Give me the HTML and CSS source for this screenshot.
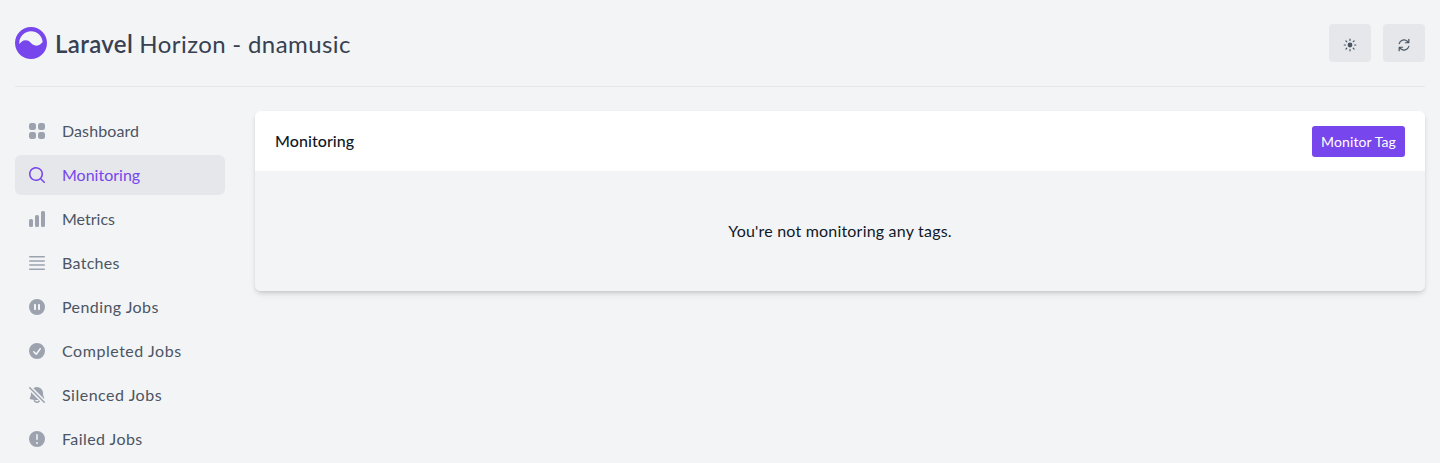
FILE: index.html
```html
<!DOCTYPE html>
<html lang="en">
<head>
<meta charset="utf-8">
<title>Horizon - Monitoring</title>
<link rel="stylesheet" href="styles.css">
</head>
<body>
<div class="container">
  <header class="header">
    <svg class="logo" viewBox="0 0 30 30"><path d="M5.26176342 26.4094389C2.04147988 23.6582233 0 19.5675182 0 15c0-4.1421356 1.67893219-7.89213562 4.39339828-10.60660172C7.10786438 1.67893219 10.8578644 0 15 0c8.2842712 0 15 6.71572875 15 15 0 8.2842712-6.7157288 15-15 15-3.716753 0-7.11777662-1.3517984-9.73823658-3.5905611zM4.03811305 15.9222506C5.70084247 14.4569342 6.87195416 12.5 10 12.5c5 0 5 5 10 5 3.1280454 0 4.2991572-1.9569336 5.961887-3.4222502C25.4934253 8.43417206 20.7645408 4 15 4 8.92486775 4 4 8.92486775 4 15c0 .3105915.01287248.6181765.03811305.9222506z"/></svg>
    <h1 class="brand"><strong>Laravel</strong> Horizon - dnamusic</h1>
    <button class="tool" aria-label="Theme"><svg viewBox="0 0 20 20"><path d="M10 2a.75.75 0 01.75.75v1.5a.75.75 0 01-1.5 0v-1.5A.75.75 0 0110 2zM10 15a.75.75 0 01.75.75v1.5a.75.75 0 01-1.5 0v-1.5A.75.75 0 0110 15zM10 7a3 3 0 100 6 3 3 0 000-6zM15.657 5.404a.75.75 0 10-1.06-1.06l-1.061 1.06a.75.75 0 001.06 1.06l1.06-1.06zM6.464 14.596a.75.75 0 10-1.06-1.06l-1.06 1.06a.75.75 0 001.06 1.06l1.06-1.06zM18 10a.75.75 0 01-.75.75h-1.5a.75.75 0 010-1.5h1.5A.75.75 0 0118 10zM5 10a.75.75 0 01-.75.75h-1.5a.75.75 0 010-1.5h1.5A.75.75 0 015 10zM14.596 15.657a.75.75 0 001.06-1.06l-1.06-1.061a.75.75 0 10-1.06 1.06l1.06 1.06zM5.404 6.464a.75.75 0 001.06-1.06l-1.06-1.06a.75.75 0 10-1.061 1.06l1.06 1.06z"/></svg></button>
    <button class="tool" aria-label="Auto refresh"><svg viewBox="0 0 20 20"><path fill-rule="evenodd" d="M15.312 11.424a5.5 5.5 0 01-9.201 2.466l-.312-.311h2.433a.75.75 0 000-1.5H3.989a.75.75 0 00-.75.75v4.242a.75.75 0 001.5 0v-2.43l.31.31a7 7 0 0011.712-3.138.75.75 0 00-1.449-.39zm1.23-3.723a.75.75 0 00.219-.53V2.929a.75.75 0 00-1.5 0V5.36l-.31-.31A7 7 0 003.239 8.188a.75.75 0 101.448.389A5.5 5.5 0 0113.89 6.11l.311.31h-2.432a.75.75 0 000 1.5h4.243a.75.75 0 00.53-.219z"/></svg></button>
  </header>
  <div class="layout">
    <nav class="sidebar">
      <a class="item dashboard"><svg viewBox="0 0 20 20"><path d="M4.25 2A2.25 2.25 0 002 4.25v2.5A2.25 2.25 0 004.25 9h2.5A2.25 2.25 0 009 6.75v-2.5A2.25 2.25 0 006.75 2h-2.5zm0 9A2.25 2.25 0 002 13.25v2.5A2.25 2.25 0 004.25 18h2.5A2.25 2.25 0 009 15.75v-2.5A2.25 2.25 0 006.75 11h-2.5zm9-9A2.25 2.25 0 0011 4.25v2.5A2.25 2.25 0 0013.25 9h2.5A2.25 2.25 0 0018 6.75v-2.5A2.25 2.25 0 0015.75 2h-2.5zm0 9A2.25 2.25 0 0011 13.25v2.5A2.25 2.25 0 0013.25 18h2.5A2.25 2.25 0 0018 15.75v-2.5A2.25 2.25 0 0015.75 11h-2.5z"/></svg><span>Dashboard</span></a>
      <a class="item monitoring active"><svg viewBox="0 0 20 20"><path fill-rule="evenodd" d="M9 3.5a5.5 5.5 0 100 11 5.5 5.5 0 000-11zM2 9a7 7 0 1112.452 4.391l3.328 3.329a.75.75 0 11-1.06 1.06l-3.329-3.328A7 7 0 012 9z"/></svg><span>Monitoring</span></a>
      <a class="item metrics"><svg viewBox="0 0 20 20"><path d="M15.5 2A1.5 1.5 0 0014 3.5v13a1.5 1.5 0 001.5 1.5h1a1.5 1.5 0 001.5-1.5v-13A1.5 1.5 0 0016.5 2h-1zM9.5 6A1.5 1.5 0 008 7.5v9A1.5 1.5 0 009.5 18h1a1.5 1.5 0 001.5-1.5v-9A1.5 1.5 0 0010.5 6h-1zM3.5 10A1.5 1.5 0 002 11.5v5A1.5 1.5 0 003.5 18h1A1.5 1.5 0 006 16.5v-5A1.5 1.5 0 004.5 10h-1z"/></svg><span>Metrics</span></a>
      <a class="item"><svg viewBox="0 0 20 20"><path fill-rule="evenodd" d="M2 3.75A.75.75 0 012.75 3h14.5a.75.75 0 010 1.5H2.75A.75.75 0 012 3.75zm0 4.167a.75.75 0 01.75-.75h14.5a.75.75 0 010 1.5H2.75a.75.75 0 01-.75-.75zm0 4.166a.75.75 0 01.75-.75h14.5a.75.75 0 010 1.5H2.75a.75.75 0 01-.75-.75zm0 4.167a.75.75 0 01.75-.75h14.5a.75.75 0 010 1.5H2.75a.75.75 0 01-.75-.75z"/></svg><span>Batches</span></a>
      <a class="item pending"><svg viewBox="0 0 20 20"><path fill-rule="evenodd" d="M2 10a8 8 0 1116 0 8 8 0 01-16 0zm5-2.25A.75.75 0 017.75 7h.5a.75.75 0 01.75.75v4.5a.75.75 0 01-.75.75h-.5a.75.75 0 01-.75-.75v-4.5zm4 0a.75.75 0 01.75-.75h.5a.75.75 0 01.75.75v4.5a.75.75 0 01-.75.75h-.5a.75.75 0 01-.75-.75v-4.5z"/></svg><span>Pending Jobs</span></a>
      <a class="item completed"><svg viewBox="0 0 20 20"><path fill-rule="evenodd" d="M10 18a8 8 0 100-16 8 8 0 000 16zm3.857-9.809a.75.75 0 00-1.214-.882l-3.483 4.79-1.88-1.88a.75.75 0 10-1.06 1.061l2.5 2.5a.75.75 0 001.137-.089l4-5.5z"/></svg><span>Completed Jobs</span></a>
      <a class="item silenced"><svg viewBox="0 0 20 20"><path d="M4 8c0-.26.017-.517.049-.77l7.722 7.723a33.56 33.56 0 01-3.722-.01 2 2 0 003.862.15l1.134 1.134a3.5 3.5 0 01-6.53-1.409 32.91 32.91 0 01-3.257-.508.75.75 0 01-.515-1.076A11.448 11.448 0 004 8zM17.266 13.9a.756.756 0 01-.068.116L6.389 3.207A6 6 0 0116 8c.001 1.887.455 3.665 1.258 5.234a.75.75 0 01.01.666zM3.28 2.22a.75.75 0 00-1.06 1.06l14.5 14.5a.75.75 0 101.06-1.06L3.28 2.22z"/></svg><span>Silenced Jobs</span></a>
      <a class="item failed"><svg viewBox="0 0 20 20"><path fill-rule="evenodd" d="M18 10a8 8 0 11-16 0 8 8 0 0116 0zm-8-5a.75.75 0 01.75.75v4.5a.75.75 0 01-1.5 0v-4.5A.75.75 0 0110 5zm0 10a1 1 0 100-2 1 1 0 000 2z"/></svg><span>Failed Jobs</span></a>
    </nav>
    <main class="card">
      <div class="card-header">
        <h2 class="title">Monitoring</h2>
        <button class="primary">Monitor Tag</button>
      </div>
      <div class="empty"><span>You're not monitoring any tags.</span></div>
    </main>
  </div>
</div>
</body>
</html>
```
FILE: styles.css
```css
* { box-sizing: border-box; }
body {
  margin: 0;
  height: 463px;
  overflow: hidden;
  background: #f3f4f6;
  color: #111827;
  font: 16px/24px Lato, sans-serif;
}
.container { padding: 0 15px; }
.header {
  display: flex;
  align-items: center;
  height: 87px;
  border-bottom: 1px solid #e5e7eb;
}
.logo { width: 32px; height: 32px; fill: #7746ec; }
.brand {
  flex: 1;
  margin: 1px 0 0 8px;
  color: #374151;
  font-size: 24px;
  font-weight: 400;
  line-height: 36px;
  letter-spacing: 0.45px;
  word-spacing: -0.4px;
}
.brand strong { font-weight: 600; letter-spacing: 0.35px; }
.tool {
  display: flex;
  align-items: center;
  justify-content: center;
  width: 42px;
  height: 38px;
  margin-left: 12px;
  padding: 4px 0 0;
  border: 0;
  border-radius: 4px;
  background: #e5e7eb;
}
.tool svg { width: 16px; height: 16px; fill: #4b5563; }
.layout { display: flex; align-items: flex-start; gap: 30px; padding-top: 24px; }
.sidebar { display: flex; flex-direction: column; gap: 4px; width: 210px; }
.item {
  display: flex;
  align-items: center;
  gap: 15px;
  height: 40px;
  padding: 0 12px;
  border-radius: 6px;
  color: #4b5563;
  letter-spacing: 0.3px;
}
.item svg { width: 20px; height: 20px; fill: #9ca3af; }
.item span { padding-bottom: 1px; }
.dashboard { letter-spacing: 0.1px; }
.monitoring, .metrics { letter-spacing: 0; }
.pending, .failed { letter-spacing: 0.43px; }
.completed { letter-spacing: 0.54px; }
.silenced { letter-spacing: 0.5px; }
.item.active { background: #e5e7eb; color: #7746ec; }
.item.active svg { fill: #7746ec; }
.card {
  flex: 1;
  overflow: hidden;
  border-radius: 6px;
  box-shadow: 0 4px 6px -1px rgba(0, 0, 0, 0.1), 0 2px 4px -1px rgba(0, 0, 0, 0.12);
}
.card-header {
  display: flex;
  align-items: center;
  justify-content: space-between;
  height: 60px;
  padding: 0 20px;
  background: #fff;
}
.title { margin: 0 0 1px; font-size: 16px; font-weight: 500; letter-spacing: 0.07px; }
.primary {
  width: 93px;
  height: 31px;
  margin-top: 1px;
  padding: 0 0 1px;
  border: 0;
  border-radius: 3px;
  background: #7746ec;
  color: #fff;
  font: 14px/21px Lato, sans-serif;
  letter-spacing: 0.1px;
}
.empty {
  display: flex;
  align-items: center;
  justify-content: center;
  height: 120px;
  padding-bottom: 1px;
  background: #f3f4f6;
  letter-spacing: 0.2px;
}
```
